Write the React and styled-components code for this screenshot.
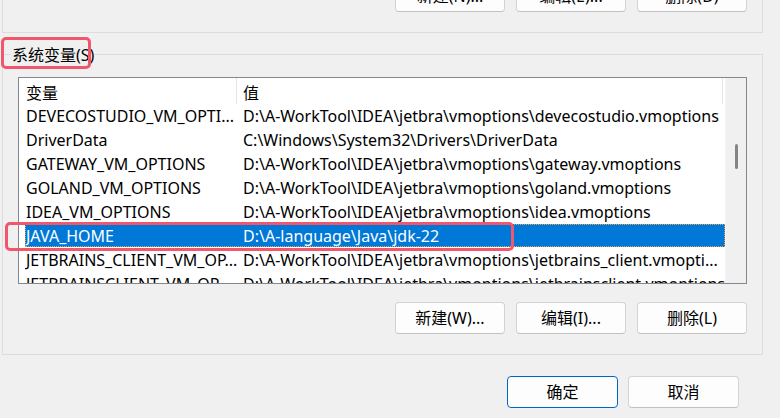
import React from 'react';
import styled, { createGlobalStyle } from 'styled-components';

const Global = createGlobalStyle`
  html, body { margin: 0; padding: 0; background: #f0f0f0; }
  body {
    font-family: "Noto Sans", "Noto Sans CJK SC", sans-serif;
    font-size: 16px;
    color: #000;
  }
  * { box-sizing: border-box; }
`;

const Window = styled.div`
  position: relative;
  width: 780px;
  height: 418px;
  overflow: hidden;
  background: #f0f0f0;
  display: flex;
  flex-direction: column;
  padding-left: 2px;
`;

const Group = styled.div`
  position: relative;
  width: 761px;
  border: 1px solid #dcdcdc;
`;

const TopGroup = styled(Group)`
  margin-top: -20px;
  border-top: none;
  padding: 0 15px 20px 0;
`;

const SystemGroup = styled(Group)`
  margin-top: 21px;
  padding: 22px 15px 20px 15px;
`;

const GroupLabel = styled.span`
  position: absolute;
  left: 8px;
  top: -10px;
  padding: 0 1px;
  line-height: 20px;
  background: #f0f0f0;
`;

const ButtonRow = styled.div`
  display: flex;
  justify-content: flex-end;
  gap: ${p => p.$gap || 11}px;
  margin-top: ${p => p.$top || 0}px;
  padding-right: ${p => p.$right || 0}px;
`;

const Button = styled.button`
  width: ${p => p.$w || 110}px;
  height: 32px;
  font-family: inherit;
  font-size: 16px;
  color: #000;
  background: #fdfdfd;
  border: 1px solid ${p => (p.$primary ? '#0067c0' : '#d3d3d3')};
  border-bottom-color: ${p => (p.$primary ? '#0067c0' : '#c2c2c2')};
  border-radius: 4px;
  padding: 0;
  line-height: 30px;
`;

const ListBox = styled.div`
  display: flex;
  height: 207px;
  border: 1px solid #828790;
  background: #fff;
  overflow: hidden;
`;

const ListContent = styled.div`
  flex: 1;
  min-width: 0;
  display: flex;
  flex-direction: column;
`;

const Header = styled.div`
  display: flex;
  height: 26px;
  flex-shrink: 0;
`;

const HeaderCell = styled.div`
  width: ${p => p.$w}px;
  padding-left: ${p => p.$pad}px;
  padding-top: 4px;
  line-height: 22px;
  border-right: 1px solid #e5e5e5;
  white-space: nowrap;
`;

const Row = styled.div`
  height: 24px;
  flex-shrink: 0;
  padding-left: 6px;
  display: flex;
`;

const Line = styled.div`
  flex: 1;
  height: 23px;
  display: flex;
  background: ${p => (p.$selected ? '#0078d7' : 'transparent')};
  color: ${p => (p.$selected ? '#fff' : '#000')};
  outline: ${p => (p.$selected ? '1px dotted #f0a040' : 'none')};
  outline-offset: -1px;
`;

const Cell = styled.div`
  width: ${p => (p.$w ? `${p.$w}px` : 'auto')};
  flex: ${p => (p.$w ? '0 0 auto' : '1')};
  padding-left: ${p => p.$pad}px;
  padding-top: 2px;
  line-height: 21px;
  white-space: nowrap;
  overflow: hidden;
`;

const ScrollBar = styled.div`
  position: relative;
  width: 21px;
  flex-shrink: 0;
  background: #f0f0f0;
  border-left: 1px solid #f4f4f4;
`;

const Thumb = styled.div`
  position: absolute;
  left: 9px;
  top: 66px;
  width: 3px;
  height: 25px;
  border-radius: 2px;
  background: #858585;
`;

const Annotation = styled.div`
  position: absolute;
  border: 3px solid #f0566c;
  border-radius: 5px;
  pointer-events: none;
`;

const rows = [
  ['DEVECOSTUDIO_VM_OPTI...', 'D:\\A-WorkTool\\IDEA\\jetbra\\vmoptions\\devecostudio.vmoptions'],
  ['DriverData', 'C:\\Windows\\System32\\Drivers\\DriverData'],
  ['GATEWAY_VM_OPTIONS', 'D:\\A-WorkTool\\IDEA\\jetbra\\vmoptions\\gateway.vmoptions'],
  ['GOLAND_VM_OPTIONS', 'D:\\A-WorkTool\\IDEA\\jetbra\\vmoptions\\goland.vmoptions'],
  ['IDEA_VM_OPTIONS', 'D:\\A-WorkTool\\IDEA\\jetbra\\vmoptions\\idea.vmoptions'],
  ['JAVA_HOME', 'D:\\A-language\\Java\\jdk-22'],
  ['JETBRAINS_CLIENT_VM_OP...', 'D:\\A-WorkTool\\IDEA\\jetbra\\vmoptions\\jetbrains_client.vmopti...'],
  ['JETBRAINSCLIENT_VM_OP...', 'D:\\A-WorkTool\\IDEA\\jetbra\\vmoptions\\jetbrainsclient.vmoptions'],
];

export default function App() {
  return (
    <>
      <Global />
      <Window>
        <TopGroup>
          <ButtonRow>
            <Button>新建(N)...</Button>
            <Button>编辑(E)...</Button>
            <Button>删除(D)</Button>
          </ButtonRow>
        </TopGroup>

        <SystemGroup>
          <GroupLabel>系统变量(S)</GroupLabel>
          <ListBox>
            <ListContent>
              <Header>
                <HeaderCell $w={218} $pad={7}>变量</HeaderCell>
                <HeaderCell $w={486} $pad={6}>值</HeaderCell>
              </Header>
              {rows.map(([name, value], i) => (
                <Row key={name}>
                  <Line $selected={i === 5}>
                    <Cell $w={212} $pad={1}>{name}</Cell>
                    <Cell $pad={6}>{value}</Cell>
                  </Line>
                </Row>
              ))}
            </ListContent>
            <ScrollBar>
              <Thumb />
            </ScrollBar>
          </ListBox>
          <ButtonRow $top={18}>
            <Button>新建(W)...</Button>
            <Button>编辑(I)...</Button>
            <Button>删除(L)</Button>
          </ButtonRow>
        </SystemGroup>

        <ButtonRow $top={21} $right={41} $gap={10}>
          <Button $primary $w={111}>确定</Button>
          <Button $w={111}>取消</Button>
        </ButtonRow>

        <Annotation style={{ left: 1, top: 37, width: 90, height: 32 }} />
        <Annotation style={{ left: 5, top: 222, width: 509, height: 29 }} />
      </Window>
    </>
  );
}
